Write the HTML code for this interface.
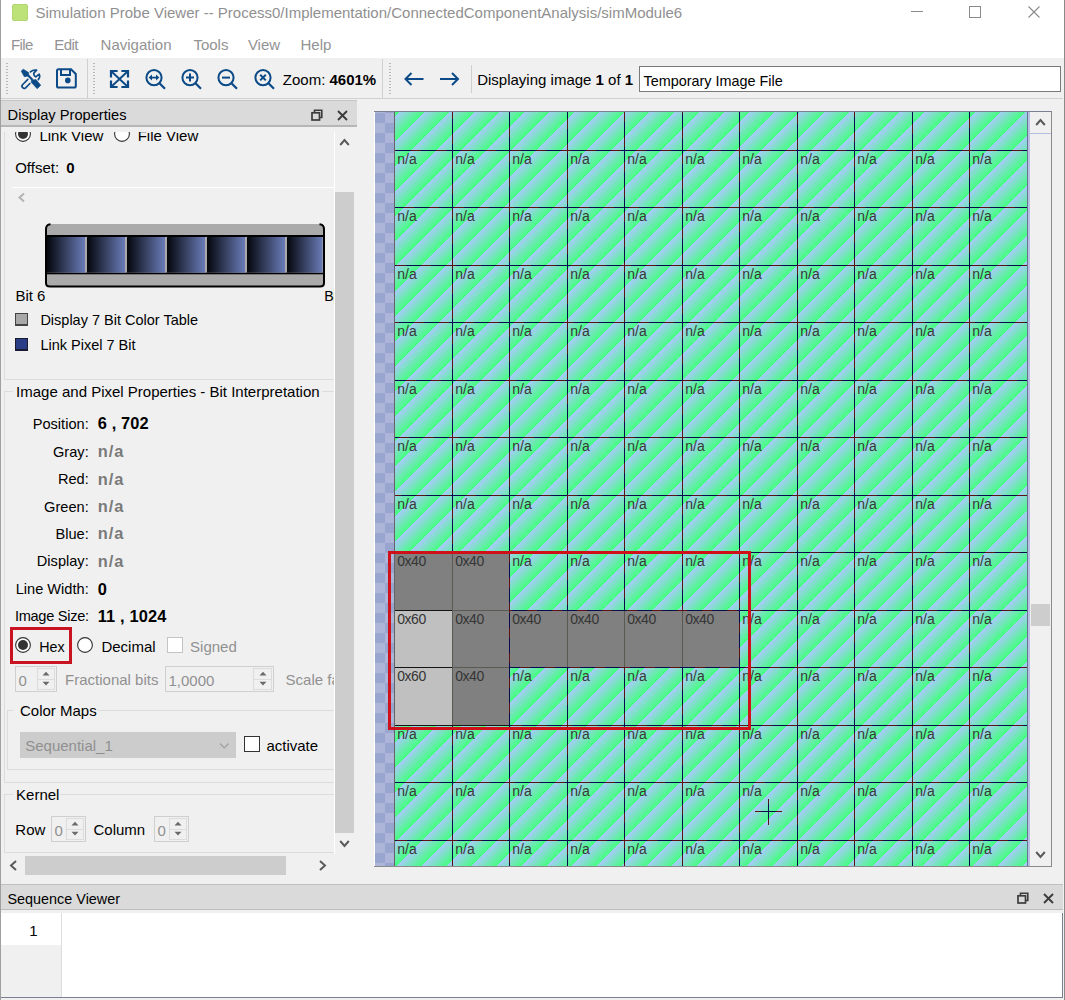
<!DOCTYPE html>
<html><head><meta charset="utf-8"><title>Simulation Probe Viewer</title>
<style>
html,body{margin:0;padding:0}
body{width:1065px;height:1000px;overflow:hidden;position:relative;background:#f0f0f0;font-family:"Liberation Sans",sans-serif}
.a{position:absolute}
.t{white-space:nowrap}
b{font-weight:bold}
</style></head><body>
<div class="a" style="left:0px;top:0px;width:1065px;height:58px;background:#fff"></div>
<div class="a" style="left:12px;top:4px;width:16px;height:17px;background:#bde27a;border-radius:2px;border:1px solid #b2d670;box-sizing:border-box"></div>
<div class="a t" style="left:35.5px;top:4.95px;font-size:15px;line-height:15px;color:#909090;font-weight:normal;letter-spacing:0px;">Simulation Probe Viewer -- Process0/Implementation/ConnectedComponentAnalysis/simModule6</div>
<div class="a" style="left:911px;top:11px;width:12px;height:1px;background:#8a8a8a"></div>
<div class="a" style="left:969px;top:6px;width:12px;height:12px;border:1px solid #8a8a8a;box-sizing:border-box"></div>
<svg class="a" style="left:1027px;top:5px;" width="14" height="14" viewBox="0 0 14 14"><path d="M1.5 1.5 L12.5 12.5 M12.5 1.5 L1.5 12.5" stroke="#8a8a8a" stroke-width="1.1"/></svg>
<div class="a t" style="left:11px;top:37.25px;font-size:15px;line-height:15px;color:#939393;font-weight:normal;letter-spacing:-0.6px;">File</div>
<div class="a t" style="left:54.2px;top:37.25px;font-size:15px;line-height:15px;color:#939393;font-weight:normal;letter-spacing:-0.5px;">Edit</div>
<div class="a t" style="left:100.6px;top:37.25px;font-size:15px;line-height:15px;color:#939393;font-weight:normal;letter-spacing:0px;">Navigation</div>
<div class="a t" style="left:193.4px;top:37.25px;font-size:15px;line-height:15px;color:#939393;font-weight:normal;letter-spacing:0px;">Tools</div>
<div class="a t" style="left:247.9px;top:37.25px;font-size:15px;line-height:15px;color:#939393;font-weight:normal;letter-spacing:0px;">View</div>
<div class="a t" style="left:300.5px;top:37.25px;font-size:15px;line-height:15px;color:#939393;font-weight:normal;letter-spacing:0px;">Help</div>
<div class="a" style="left:0px;top:98px;width:1063px;height:1px;background:#d0d0d0"></div>
<div class="a" style="left:6px;top:63px;width:2px;height:33px;background:repeating-linear-gradient(180deg,#b8b8b8 0 1px,transparent 1px 3px)"></div>
<div class="a" style="left:93px;top:63px;width:2px;height:33px;background:repeating-linear-gradient(180deg,#b8b8b8 0 1px,transparent 1px 3px)"></div>
<div class="a" style="left:389px;top:63px;width:2px;height:33px;background:repeating-linear-gradient(180deg,#b8b8b8 0 1px,transparent 1px 3px)"></div>
<div class="a" style="left:87px;top:59px;width:1px;height:39px;background:#cfcfcf"></div>
<div class="a" style="left:382px;top:59px;width:1px;height:39px;background:#cfcfcf"></div>
<div class="a" style="left:471px;top:65px;width:1px;height:28px;background:#cfcfcf"></div>
<svg class="a" style="left:20px;top:68px;" width="23" height="23" viewBox="0 0 23 23"><g fill="#0b4a86" stroke="#0b4a86" stroke-width="0.6" stroke-linejoin="round">
<path d="M1.2 3.1 L3.3 1.2 L8.6 4.5 L8.9 7.9 L4.3 8.7 Z"/>
<path d="M11.2 14.2 L11.5 12.2 L15.9 11.5 L20.8 17.2 L17.2 20.8 Z"/></g>
<path d="M8.2 7.6 L12.6 12" stroke="#0b4a86" stroke-width="2.1" fill="none"/>
<path d="M7.8 11.4 L2.5 16.7 A2.2 2.2 0 0 0 5.6 19.8 L9.9 15.5" stroke="#0b4a86" stroke-width="1.65" fill="none" stroke-linecap="round"/>
<path d="M10.4 3.9 Q13 1.6 16.6 2.1 L14 4.9 Q13.1 7.4 15.8 8.9 L19.2 6.2 Q20.6 9.2 18.3 11.6" stroke="#0b4a86" stroke-width="1.65" fill="none" stroke-linecap="round" stroke-linejoin="round"/></svg>
<svg class="a" style="left:56px;top:68px;" width="22" height="21" viewBox="0 0 22 21"><path d="M2.6 1.2 H15 L19.8 6 V18 Q19.8 19.6 18.2 19.6 H2.6 Q1 19.6 1 18 V2.8 Q1 1.2 2.6 1.2 Z" fill="none" stroke="#0b4a86" stroke-width="2"/>
<path d="M5 1.5 V7 H14 V1.5" fill="none" stroke="#0b4a86" stroke-width="2"/>
<circle cx="11.8" cy="12.4" r="2.8" fill="#0b4a86"/></svg>
<svg class="a" style="left:109px;top:69px;" width="21" height="20" viewBox="0 0 21 20"><g stroke="#0b4a86" stroke-width="1.9" fill="none"><path d="M2.5 2.5 L18.5 17.5 M18.5 2.5 L2.5 17.5"/></g>
<g stroke="#0b4a86" stroke-width="2.2" fill="none" stroke-linecap="square"><path d="M2 7.5 V2 H7.5"/><path d="M19 7.5 V2 H13.5"/><path d="M2 12.5 V18 H7.5"/><path d="M19 12.5 V18 H13.5"/></g></svg>
<svg class="a" style="left:143.5px;top:68px;" width="24" height="23" viewBox="0 0 24 23"><circle cx="10" cy="9.6" r="7.6" fill="none" stroke="#0b4a86" stroke-width="2"/>
<path d="M15.2 15 L21 20.8" stroke="#0b4a86" stroke-width="2.2" fill="none"/><path d="M6.8 9.6 H13.2" stroke="#0b4a86" stroke-width="1.8"/><path d="M4.6 9.6 L8 6.6 V12.6 Z M15.4 9.6 L12 6.6 V12.6 Z" fill="#0b4a86"/></svg>
<svg class="a" style="left:179.6px;top:68px;" width="24" height="23" viewBox="0 0 24 23"><circle cx="10" cy="9.6" r="7.6" fill="none" stroke="#0b4a86" stroke-width="2"/>
<path d="M15.2 15 L21 20.8" stroke="#0b4a86" stroke-width="2.2" fill="none"/><path d="M6 9.6 H14 M10 5.6 V13.6" stroke="#0b4a86" stroke-width="2"/></svg>
<svg class="a" style="left:215.5px;top:68px;" width="24" height="23" viewBox="0 0 24 23"><circle cx="10" cy="9.6" r="7.6" fill="none" stroke="#0b4a86" stroke-width="2"/>
<path d="M15.2 15 L21 20.8" stroke="#0b4a86" stroke-width="2.2" fill="none"/><path d="M6 9.6 H14" stroke="#0b4a86" stroke-width="2"/></svg>
<svg class="a" style="left:252.60000000000002px;top:68px;" width="24" height="23" viewBox="0 0 24 23"><circle cx="10" cy="9.6" r="7.6" fill="none" stroke="#0b4a86" stroke-width="2"/>
<path d="M15.2 15 L21 20.8" stroke="#0b4a86" stroke-width="2.2" fill="none"/><path d="M7.2 6.8 L12.8 12.4 M12.8 6.8 L7.2 12.4" stroke="#0b4a86" stroke-width="2"/></svg>
<div class="a t" style="left:282.8px;top:71.85px;font-size:15px;line-height:15px;color:#000;font-weight:normal;letter-spacing:0px;">Zoom: <b>4601%</b></div>
<svg class="a" style="left:403px;top:71px;" width="22" height="16" viewBox="0 0 22 16"><path d="M20.5 8 H2.5 M8.5 2 L2.5 8 L8.5 14" stroke="#0b4a86" stroke-width="2" fill="none"/></svg>
<svg class="a" style="left:439px;top:71px;" width="22" height="16" viewBox="0 0 22 16"><path d="M1 8 H19 M13 2 L19 8 L13 14" stroke="#0b4a86" stroke-width="2" fill="none"/></svg>
<div class="a t" style="left:477.2px;top:72.15px;font-size:15px;line-height:15px;color:#000;font-weight:normal;letter-spacing:0px;">Displaying image <b>1</b> of <b>1</b></div>
<div class="a" style="left:639px;top:66px;width:422px;height:26px;background:#fff;border:1px solid #7a7a7a;box-sizing:border-box"></div>
<div class="a t" style="left:643.6px;top:73.96px;font-size:14.4px;line-height:14.4px;color:#000;font-weight:normal;letter-spacing:0px;">Temporary Image File</div>
<div class="a" style="left:0px;top:100px;width:357px;height:27px;background:#dadada;border-top:1px solid #c4c4c4;border-bottom:2px solid #b6b6b6;box-sizing:border-box"></div>
<div class="a t" style="left:7.6px;top:108.24px;font-size:14.66px;line-height:14.66px;color:#000;font-weight:normal;letter-spacing:0px;">Display Properties</div>
<svg class="a" style="left:311px;top:109px;" width="12" height="12" viewBox="0 0 12 12"><path d="M3.5 3.5 V1.2 H10.8 V8.5 H8.5" fill="none" stroke="#3c3c3c" stroke-width="1.6"/><rect x="1" y="3.8" width="7.5" height="7.2" fill="none" stroke="#3c3c3c" stroke-width="1.7"/></svg>
<svg class="a" style="left:337px;top:110px;" width="11" height="11" viewBox="0 0 11 11"><path d="M1 1 L10 10 M10 1 L1 10" stroke="#3c3c3c" stroke-width="1.9"/></svg>
<div class="a" style="left:0;top:0;width:1065px;height:1000px;clip-path:inset(132px 731px 147px 1px)">
<div class="a" style="left:4px;top:100px;width:1px;height:279px;background:#dcdcdc"></div>
<div class="a" style="left:4px;top:379px;width:330px;height:1px;background:#dcdcdc"></div>
<svg class="a" style="left:15px;top:125.69999999999999px;" width="16" height="16" viewBox="0 0 16 16"><circle cx="8" cy="8" r="7.4" fill="#fff" stroke="#333" stroke-width="1.1"/><circle cx="8" cy="8" r="5" fill="#333"/></svg>
<div class="a t" style="left:39.4px;top:128.05px;font-size:15px;line-height:15px;color:#000;font-weight:normal;letter-spacing:0px;">Link View</div>
<svg class="a" style="left:114px;top:125.69999999999999px;" width="16" height="16" viewBox="0 0 16 16"><circle cx="8" cy="8" r="7.4" fill="#fff" stroke="#333" stroke-width="1.1"/></svg>
<div class="a t" style="left:137.7px;top:128.05px;font-size:15px;line-height:15px;color:#000;font-weight:normal;letter-spacing:0px;">File View</div>
<div class="a t" style="left:15.2px;top:159.65px;font-size:15px;line-height:15px;color:#000;font-weight:normal;letter-spacing:0px;">Offset:</div>
<div class="a t" style="left:66.2px;top:159.65px;font-size:15px;line-height:15px;color:#000;font-weight:normal;letter-spacing:0px;"><b>0</b></div>
<div class="a" style="left:12px;top:187px;width:322px;height:1px;background:#fff"></div>
<svg class="a" style="left:17px;top:192px;" width="9" height="11" viewBox="0 0 9 11"><path d="M7 1.5 L2.5 5.5 L7 9.5" stroke="#b4b4b4" stroke-width="2" fill="none"/></svg>
<svg class="a" style="left:45px;top:223px;" width="280" height="65" viewBox="0 0 280 65"><defs><linearGradient id="g" x1="0" x2="1" y1="0" y2="0"><stop offset="0" stop-color="#04060c"/><stop offset="1" stop-color="#6a7cb8"/></linearGradient></defs>
<path d="M5 1 H275 Q279 1 279 5 V60 Q279 64 275 64 H5 Q1 64 1 60 V5 Q1 1 5 1 Z" fill="#aaaaaa"/>
<path d="M5.5 1.2 Q1 1.5 1 6 V60 Q1 63.5 5 63.5 H275 Q279 63.5 279 60 V6 Q279 1.5 274.5 1.2" fill="none" stroke="#000" stroke-width="2"/>
<rect x="1" y="12" width="278" height="2" fill="#000"/>
<rect x="1" y="49.7" width="278" height="1.6" fill="#000"/>
<rect x="2" y="14" width="38" height="35.7" fill="url(#g)"/><rect x="42" y="14" width="38" height="35.7" fill="url(#g)"/><rect x="82" y="14" width="38" height="35.7" fill="url(#g)"/><rect x="122" y="14" width="38" height="35.7" fill="url(#g)"/><rect x="162" y="14" width="38" height="35.7" fill="url(#g)"/><rect x="202" y="14" width="38" height="35.7" fill="url(#g)"/><rect x="242" y="14" width="35.5" height="35.7" fill="url(#g)"/>
<rect x="0" y="12" width="2" height="40" fill="#000"/></svg>
<div class="a t" style="left:15.4px;top:287.95px;font-size:15px;line-height:15px;color:#000;font-weight:normal;letter-spacing:0px;">Bit 6</div>
<div class="a t" style="left:324.3px;top:288.63px;font-size:14.2px;line-height:14.2px;color:#000;font-weight:normal;letter-spacing:-0.4px;">Bit 0</div>
<div class="a" style="left:15px;top:313px;width:13px;height:13px;background:#a8a8a8;border:1px solid #444;border-width:1px 1px 2px 1px;box-sizing:border-box"></div>
<div class="a t" style="left:40.4px;top:313.48px;font-size:14.5px;line-height:14.5px;color:#000;font-weight:normal;letter-spacing:0px;">Display 7 Bit Color Table</div>
<div class="a" style="left:15px;top:338px;width:13px;height:13px;background:#2a3e88;border:1px solid #1a1a30;border-width:1px 1px 2px 1px;box-sizing:border-box"></div>
<div class="a t" style="left:40.4px;top:338.07px;font-size:14.5px;line-height:14.5px;color:#000;font-weight:normal;letter-spacing:0px;">Link Pixel 7 Bit</div>
<div class="a" style="left:4px;top:391px;width:9px;height:1px;background:#dcdcdc"></div>
<div class="a" style="left:322px;top:391px;width:12px;height:1px;background:#dcdcdc"></div>
<div class="a" style="left:4px;top:391px;width:1px;height:392px;background:#dcdcdc"></div>
<div class="a" style="left:4px;top:782px;width:330px;height:1px;background:#dcdcdc"></div>
<div class="a t" style="left:16.1px;top:383.95px;font-size:15px;line-height:15px;color:#000;font-weight:normal;letter-spacing:0px;">Image and Pixel Properties - Bit Interpretation</div>
<div class="a t" style="right:976.3px;top:416.89px;font-size:14.6px;line-height:14.6px;color:#000;font-weight:normal;letter-spacing:0px;text-align:right;">Position:</div>
<div class="a t" style="left:97.7px;top:415.36px;font-size:16.4px;line-height:16.4px;color:#000;font-weight:normal;letter-spacing:0.15px;"><b>6 , 702</b></div>
<div class="a t" style="right:976.3px;top:444.59px;font-size:14.6px;line-height:14.6px;color:#000;font-weight:normal;letter-spacing:0px;text-align:right;">Gray:</div>
<div class="a t" style="left:97.7px;top:443.06px;font-size:16.4px;line-height:16.4px;color:#7a7a7a;font-weight:normal;letter-spacing:1.0px;"><b>n/a</b></div>
<div class="a t" style="right:976.3px;top:472.19px;font-size:14.6px;line-height:14.6px;color:#000;font-weight:normal;letter-spacing:0px;text-align:right;">Red:</div>
<div class="a t" style="left:97.7px;top:470.66px;font-size:16.4px;line-height:16.4px;color:#7a7a7a;font-weight:normal;letter-spacing:1.0px;"><b>n/a</b></div>
<div class="a t" style="right:976.3px;top:499.59px;font-size:14.6px;line-height:14.6px;color:#000;font-weight:normal;letter-spacing:0px;text-align:right;">Green:</div>
<div class="a t" style="left:97.7px;top:498.06px;font-size:16.4px;line-height:16.4px;color:#7a7a7a;font-weight:normal;letter-spacing:1.0px;"><b>n/a</b></div>
<div class="a t" style="right:976.3px;top:526.89px;font-size:14.6px;line-height:14.6px;color:#000;font-weight:normal;letter-spacing:0px;text-align:right;">Blue:</div>
<div class="a t" style="left:97.7px;top:525.36px;font-size:16.4px;line-height:16.4px;color:#7a7a7a;font-weight:normal;letter-spacing:1.0px;"><b>n/a</b></div>
<div class="a t" style="right:976.3px;top:554.49px;font-size:14.6px;line-height:14.6px;color:#000;font-weight:normal;letter-spacing:0px;text-align:right;">Display:</div>
<div class="a t" style="left:97.7px;top:552.96px;font-size:16.4px;line-height:16.4px;color:#7a7a7a;font-weight:normal;letter-spacing:1.0px;"><b>n/a</b></div>
<div class="a t" style="right:976.3px;top:582.09px;font-size:14.6px;line-height:14.6px;color:#000;font-weight:normal;letter-spacing:0px;text-align:right;">Line Width:</div>
<div class="a t" style="left:97.7px;top:580.56px;font-size:16.4px;line-height:16.4px;color:#000;font-weight:normal;letter-spacing:0.15px;"><b>0</b></div>
<div class="a t" style="right:976.3px;top:609.39px;font-size:14.6px;line-height:14.6px;color:#000;font-weight:normal;letter-spacing:-0.3px;text-align:right;">Image Size:</div>
<div class="a t" style="left:97.7px;top:607.86px;font-size:16.4px;line-height:16.4px;color:#000;font-weight:normal;letter-spacing:0.15px;"><b>11 , 1024</b></div>
<svg class="a" style="left:15px;top:637.2px;" width="16" height="16" viewBox="0 0 16 16"><circle cx="8" cy="8" r="7.4" fill="#fff" stroke="#333" stroke-width="1.1"/><circle cx="8" cy="8" r="5" fill="#333"/></svg>
<div class="a t" style="left:39.2px;top:639.85px;font-size:14.3px;line-height:14.3px;color:#000;font-weight:normal;letter-spacing:0px;">Hex</div>
<svg class="a" style="left:77px;top:637.2px;" width="16" height="16" viewBox="0 0 16 16"><circle cx="8" cy="8" r="7.4" fill="#fff" stroke="#333" stroke-width="1.1"/></svg>
<div class="a t" style="left:101.4px;top:639.25px;font-size:15px;line-height:15px;color:#000;font-weight:normal;letter-spacing:0px;">Decimal</div>
<div class="a" style="left:167px;top:637px;width:16px;height:16px;background:#fff;border:1px solid #c4c4c4;box-sizing:border-box"></div>
<div class="a t" style="left:190.1px;top:639.05px;font-size:15px;line-height:15px;color:#909090;font-weight:normal;letter-spacing:0px;">Signed</div>
<div class="a" style="left:15px;top:666px;width:42px;height:26px;border:1px solid #cfcfcf;box-sizing:border-box"></div>
<div class="a" style="left:37px;top:668px;width:18px;height:22px;border:1px solid #dcdcdc;box-sizing:border-box"></div>
<div class="a" style="left:37px;top:678.5px;width:18px;height:1px;background:#dcdcdc"></div>
<svg class="a" style="left:42.0px;top:671px;" width="8" height="16" viewBox="0 0 8 16"><path d="M0.5 4.6 L4 0.8 L7.5 4.6 Z M0.5 10.8 L4 14.6 L7.5 10.8 Z" fill="#6a6a6a"/></svg>
<div class="a t" style="left:18.5px;top:672.75px;font-size:15px;line-height:15px;color:#909090;font-weight:normal;letter-spacing:0px;">0</div>
<div class="a t" style="left:65.1px;top:671.85px;font-size:15px;line-height:15px;color:#909090;font-weight:normal;letter-spacing:0px;">Fractional bits</div>
<div class="a" style="left:165px;top:666px;width:109px;height:26px;border:1px solid #cfcfcf;box-sizing:border-box"></div>
<div class="a" style="left:253px;top:668px;width:19px;height:22px;border:1px solid #dcdcdc;box-sizing:border-box"></div>
<div class="a" style="left:253px;top:678.5px;width:19px;height:1px;background:#dcdcdc"></div>
<svg class="a" style="left:258.5px;top:671px;" width="8" height="16" viewBox="0 0 8 16"><path d="M0.5 4.6 L4 0.8 L7.5 4.6 Z M0.5 10.8 L4 14.6 L7.5 10.8 Z" fill="#6a6a6a"/></svg>
<div class="a t" style="left:168.5px;top:672.75px;font-size:15px;line-height:15px;color:#909090;font-weight:normal;letter-spacing:0px;">1,0000</div>
<div class="a t" style="left:285.6px;top:671.85px;font-size:15px;line-height:15px;color:#909090;font-weight:normal;letter-spacing:0px;">Scale factor</div>
<div class="a" style="left:7px;top:710px;width:6px;height:1px;background:#dcdcdc"></div>
<div class="a" style="left:98px;top:710px;width:236px;height:1px;background:#dcdcdc"></div>
<div class="a" style="left:7px;top:710px;width:1px;height:59px;background:#dcdcdc"></div>
<div class="a" style="left:7px;top:769px;width:327px;height:1px;background:#dcdcdc"></div>
<div class="a t" style="left:20px;top:702.75px;font-size:15px;line-height:15px;color:#000;font-weight:normal;letter-spacing:0px;">Color Maps</div>
<div class="a" style="left:20px;top:732px;width:216px;height:26px;background:#cccccc"></div>
<div class="a t" style="left:25.2px;top:738.45px;font-size:15px;line-height:15px;color:#909090;font-weight:normal;letter-spacing:0px;">Sequential_1</div>
<svg class="a" style="left:219px;top:742px;" width="11" height="8" viewBox="0 0 11 8"><path d="M1 1.5 L5.3 6 L9.6 1.5" stroke="#a0a0a0" stroke-width="1.2" fill="none"/></svg>
<div class="a" style="left:244px;top:736px;width:16px;height:16px;background:#fff;border:1px solid #333;box-sizing:border-box"></div>
<div class="a t" style="left:266.4px;top:738.25px;font-size:15px;line-height:15px;color:#000;font-weight:normal;letter-spacing:0px;">activate</div>
<div class="a" style="left:4px;top:794px;width:9px;height:1px;background:#dcdcdc"></div>
<div class="a" style="left:60px;top:794px;width:274px;height:1px;background:#dcdcdc"></div>
<div class="a" style="left:4px;top:794px;width:1px;height:59px;background:#dcdcdc"></div>
<div class="a" style="left:4px;top:852px;width:330px;height:1px;background:#dcdcdc"></div>
<div class="a t" style="left:16.1px;top:786.85px;font-size:15px;line-height:15px;color:#000;font-weight:normal;letter-spacing:0px;">Kernel</div>
<div class="a t" style="left:15.3px;top:821.75px;font-size:15px;line-height:15px;color:#000;font-weight:normal;letter-spacing:0px;">Row</div>
<div class="a" style="left:51px;top:816px;width:35px;height:26px;border:1px solid #cfcfcf;box-sizing:border-box"></div>
<div class="a" style="left:66px;top:818px;width:18px;height:22px;border:1px solid #dcdcdc;box-sizing:border-box"></div>
<div class="a" style="left:66px;top:828.5px;width:18px;height:1px;background:#dcdcdc"></div>
<svg class="a" style="left:71.0px;top:821px;" width="8" height="16" viewBox="0 0 8 16"><path d="M0.5 4.6 L4 0.8 L7.5 4.6 Z M0.5 10.8 L4 14.6 L7.5 10.8 Z" fill="#6a6a6a"/></svg>
<div class="a t" style="left:54.5px;top:822.75px;font-size:15px;line-height:15px;color:#909090;font-weight:normal;letter-spacing:0px;">0</div>
<div class="a t" style="left:93.5px;top:821.75px;font-size:15px;line-height:15px;color:#000;font-weight:normal;letter-spacing:0px;">Column</div>
<div class="a" style="left:154px;top:816px;width:35px;height:26px;border:1px solid #cfcfcf;box-sizing:border-box"></div>
<div class="a" style="left:169px;top:818px;width:18px;height:22px;border:1px solid #dcdcdc;box-sizing:border-box"></div>
<div class="a" style="left:169px;top:828.5px;width:18px;height:1px;background:#dcdcdc"></div>
<svg class="a" style="left:174.0px;top:821px;" width="8" height="16" viewBox="0 0 8 16"><path d="M0.5 4.6 L4 0.8 L7.5 4.6 Z M0.5 10.8 L4 14.6 L7.5 10.8 Z" fill="#6a6a6a"/></svg>
<div class="a t" style="left:157.5px;top:822.75px;font-size:15px;line-height:15px;color:#909090;font-weight:normal;letter-spacing:0px;">0</div>
</div>
<div class="a" style="left:10px;top:627px;width:62px;height:37px;border:3px solid #c81420;box-sizing:border-box"></div>
<div class="a" style="left:334px;top:132px;width:1px;height:722px;background:#fff"></div>
<svg class="a" style="left:339px;top:137px;" width="11" height="10" viewBox="0 0 11 10"><path d="M1.2 8 L5.5 3 L9.8 8" stroke="#5a5a5a" stroke-width="2" fill="none"/></svg>
<div class="a" style="left:335px;top:192px;width:19px;height:641px;background:#cdcdcd"></div>
<svg class="a" style="left:339px;top:839px;" width="11" height="10" viewBox="0 0 11 10"><path d="M1.2 2 L5.5 7 L9.8 2" stroke="#5a5a5a" stroke-width="2" fill="none"/></svg>
<div class="a" style="left:25px;top:856px;width:261px;height:19px;background:#cdcdcd"></div>
<svg class="a" style="left:8px;top:860px;" width="10" height="11" viewBox="0 0 10 11"><path d="M8 1 L3 5.5 L8 10" stroke="#5a5a5a" stroke-width="2" fill="none"/></svg>
<svg class="a" style="left:318px;top:860px;" width="10" height="11" viewBox="0 0 10 11"><path d="M2 1 L7 5.5 L2 10" stroke="#5a5a5a" stroke-width="2" fill="none"/></svg>
<div class="a" style="left:374px;top:111px;width:677px;height:1px;background:#7a8090"></div>
<div class="a" style="left:374px;top:866px;width:677px;height:1px;background:#8a8a8a"></div>
<div class="a" style="left:374px;top:112px;width:1px;height:754px;background:#fff"></div>
<div class="a" style="left:375px;top:112px;width:19px;height:754px;background:conic-gradient(#adb6d9 0 90deg,#97a5cf 90deg 180deg,#adb6d9 180deg 270deg,#97a5cf 270deg 360deg);background-size:20px 20px;background-position:0 1px"></div>
<div class="a" style="left:394px;top:112px;width:1px;height:754px;background:#646464"></div>
<div class="a" style="left:395px;top:112px;width:633px;height:754px;background:repeating-linear-gradient(135deg,#a6cbf8 7.181px,#44ff80 24.890px);background-attachment:fixed"></div>
<div class="a" style="left:395px;top:553px;width:57px;height:58px;background:#808080"></div>
<div class="a" style="left:453px;top:553px;width:56px;height:58px;background:#808080"></div>
<div class="a" style="left:395px;top:611px;width:57px;height:57px;background:#c0c0c0"></div>
<div class="a" style="left:453px;top:611px;width:56px;height:57px;background:#808080"></div>
<div class="a" style="left:510px;top:611px;width:57px;height:57px;background:#808080"></div>
<div class="a" style="left:568px;top:611px;width:56px;height:57px;background:#808080"></div>
<div class="a" style="left:625px;top:611px;width:57px;height:57px;background:#808080"></div>
<div class="a" style="left:683px;top:611px;width:56px;height:57px;background:#808080"></div>
<div class="a" style="left:395px;top:668px;width:57px;height:58px;background:#c0c0c0"></div>
<div class="a" style="left:453px;top:668px;width:56px;height:58px;background:#808080"></div>
<div class="a" style="left:395px;top:150px;width:633px;height:1px;background:repeating-linear-gradient(135deg,#5c1212 7.181px,#5c1212 14.252px,#0a0a4e 14.252px,#0a0a4e 24.890px);background-attachment:fixed"></div>
<div class="a" style="left:395px;top:207px;width:633px;height:1px;background:repeating-linear-gradient(135deg,#5c1212 7.181px,#5c1212 14.252px,#0a0a4e 14.252px,#0a0a4e 24.890px);background-attachment:fixed"></div>
<div class="a" style="left:395px;top:265px;width:633px;height:1px;background:repeating-linear-gradient(135deg,#5c1212 7.181px,#5c1212 14.252px,#0a0a4e 14.252px,#0a0a4e 24.890px);background-attachment:fixed"></div>
<div class="a" style="left:395px;top:322px;width:633px;height:1px;background:repeating-linear-gradient(135deg,#5c1212 7.181px,#5c1212 14.252px,#0a0a4e 14.252px,#0a0a4e 24.890px);background-attachment:fixed"></div>
<div class="a" style="left:395px;top:380px;width:633px;height:1px;background:repeating-linear-gradient(135deg,#5c1212 7.181px,#5c1212 14.252px,#0a0a4e 14.252px,#0a0a4e 24.890px);background-attachment:fixed"></div>
<div class="a" style="left:395px;top:437px;width:633px;height:1px;background:repeating-linear-gradient(135deg,#5c1212 7.181px,#5c1212 14.252px,#0a0a4e 14.252px,#0a0a4e 24.890px);background-attachment:fixed"></div>
<div class="a" style="left:395px;top:495px;width:633px;height:1px;background:repeating-linear-gradient(135deg,#5c1212 7.181px,#5c1212 14.252px,#0a0a4e 14.252px,#0a0a4e 24.890px);background-attachment:fixed"></div>
<div class="a" style="left:395px;top:552px;width:633px;height:1px;background:repeating-linear-gradient(135deg,#5c1212 7.181px,#5c1212 14.252px,#0a0a4e 14.252px,#0a0a4e 24.890px);background-attachment:fixed"></div>
<div class="a" style="left:395px;top:610px;width:633px;height:1px;background:repeating-linear-gradient(135deg,#5c1212 7.181px,#5c1212 14.252px,#0a0a4e 14.252px,#0a0a4e 24.890px);background-attachment:fixed"></div>
<div class="a" style="left:395px;top:667px;width:633px;height:1px;background:repeating-linear-gradient(135deg,#5c1212 7.181px,#5c1212 14.252px,#0a0a4e 14.252px,#0a0a4e 24.890px);background-attachment:fixed"></div>
<div class="a" style="left:395px;top:725px;width:633px;height:1px;background:repeating-linear-gradient(135deg,#5c1212 7.181px,#5c1212 14.252px,#0a0a4e 14.252px,#0a0a4e 24.890px);background-attachment:fixed"></div>
<div class="a" style="left:395px;top:782px;width:633px;height:1px;background:repeating-linear-gradient(135deg,#5c1212 7.181px,#5c1212 14.252px,#0a0a4e 14.252px,#0a0a4e 24.890px);background-attachment:fixed"></div>
<div class="a" style="left:395px;top:840px;width:633px;height:1px;background:repeating-linear-gradient(135deg,#5c1212 7.181px,#5c1212 14.252px,#0a0a4e 14.252px,#0a0a4e 24.890px);background-attachment:fixed"></div>
<div class="a" style="left:452px;top:112px;width:1px;height:754px;background:repeating-linear-gradient(135deg,#5c1212 7.181px,#5c1212 14.252px,#0a0a4e 14.252px,#0a0a4e 24.890px);background-attachment:fixed"></div>
<div class="a" style="left:509px;top:112px;width:1px;height:754px;background:repeating-linear-gradient(135deg,#5c1212 7.181px,#5c1212 14.252px,#0a0a4e 14.252px,#0a0a4e 24.890px);background-attachment:fixed"></div>
<div class="a" style="left:567px;top:112px;width:1px;height:754px;background:repeating-linear-gradient(135deg,#5c1212 7.181px,#5c1212 14.252px,#0a0a4e 14.252px,#0a0a4e 24.890px);background-attachment:fixed"></div>
<div class="a" style="left:624px;top:112px;width:1px;height:754px;background:repeating-linear-gradient(135deg,#5c1212 7.181px,#5c1212 14.252px,#0a0a4e 14.252px,#0a0a4e 24.890px);background-attachment:fixed"></div>
<div class="a" style="left:682px;top:112px;width:1px;height:754px;background:repeating-linear-gradient(135deg,#5c1212 7.181px,#5c1212 14.252px,#0a0a4e 14.252px,#0a0a4e 24.890px);background-attachment:fixed"></div>
<div class="a" style="left:739px;top:112px;width:1px;height:754px;background:repeating-linear-gradient(135deg,#5c1212 7.181px,#5c1212 14.252px,#0a0a4e 14.252px,#0a0a4e 24.890px);background-attachment:fixed"></div>
<div class="a" style="left:797px;top:112px;width:1px;height:754px;background:repeating-linear-gradient(135deg,#5c1212 7.181px,#5c1212 14.252px,#0a0a4e 14.252px,#0a0a4e 24.890px);background-attachment:fixed"></div>
<div class="a" style="left:854px;top:112px;width:1px;height:754px;background:repeating-linear-gradient(135deg,#5c1212 7.181px,#5c1212 14.252px,#0a0a4e 14.252px,#0a0a4e 24.890px);background-attachment:fixed"></div>
<div class="a" style="left:912px;top:112px;width:1px;height:754px;background:repeating-linear-gradient(135deg,#5c1212 7.181px,#5c1212 14.252px,#0a0a4e 14.252px,#0a0a4e 24.890px);background-attachment:fixed"></div>
<div class="a" style="left:969px;top:112px;width:1px;height:754px;background:repeating-linear-gradient(135deg,#5c1212 7.181px,#5c1212 14.252px,#0a0a4e 14.252px,#0a0a4e 24.890px);background-attachment:fixed"></div>
<div class="a" style="left:1027px;top:112px;width:1px;height:754px;background:#6a7090"></div>
<div class="a" style="left:395px;top:725px;width:114px;height:1px;background:#141414"></div>
<div class="a" style="left:395px;top:610px;width:57px;height:1px;background:#141414"></div>
<div class="a" style="left:452px;top:610px;width:57px;height:1px;background:#5a5a52"></div>
<div class="a" style="left:395px;top:667px;width:57px;height:1px;background:#141414"></div>
<div class="a" style="left:452px;top:667px;width:57px;height:1px;background:#5a5a52"></div>
<div class="a" style="left:452px;top:553px;width:1px;height:172px;background:#5a5a52"></div>
<div class="a" style="left:567px;top:611px;width:1px;height:56px;background:#5a5a52"></div>
<div class="a" style="left:624px;top:611px;width:1px;height:56px;background:#5a5a52"></div>
<div class="a" style="left:682px;top:611px;width:1px;height:56px;background:#5a5a52"></div>
<div class="a" style="left:0;top:0;width:1065px;height:1000px;clip-path:inset(112px 37px 134px 395px)">
<div class="a t" style="left:397.2px;top:151.70px;font-size:14px;line-height:14px;color:#383838;font-weight:normal;letter-spacing:0.1px;">n/a</div>
<div class="a t" style="left:455.2px;top:151.70px;font-size:14px;line-height:14px;color:#383838;font-weight:normal;letter-spacing:0.1px;">n/a</div>
<div class="a t" style="left:512.2px;top:151.70px;font-size:14px;line-height:14px;color:#383838;font-weight:normal;letter-spacing:0.1px;">n/a</div>
<div class="a t" style="left:570.2px;top:151.70px;font-size:14px;line-height:14px;color:#383838;font-weight:normal;letter-spacing:0.1px;">n/a</div>
<div class="a t" style="left:627.2px;top:151.70px;font-size:14px;line-height:14px;color:#383838;font-weight:normal;letter-spacing:0.1px;">n/a</div>
<div class="a t" style="left:685.2px;top:151.70px;font-size:14px;line-height:14px;color:#383838;font-weight:normal;letter-spacing:0.1px;">n/a</div>
<div class="a t" style="left:742.2px;top:151.70px;font-size:14px;line-height:14px;color:#383838;font-weight:normal;letter-spacing:0.1px;">n/a</div>
<div class="a t" style="left:800.2px;top:151.70px;font-size:14px;line-height:14px;color:#383838;font-weight:normal;letter-spacing:0.1px;">n/a</div>
<div class="a t" style="left:857.2px;top:151.70px;font-size:14px;line-height:14px;color:#383838;font-weight:normal;letter-spacing:0.1px;">n/a</div>
<div class="a t" style="left:915.2px;top:151.70px;font-size:14px;line-height:14px;color:#383838;font-weight:normal;letter-spacing:0.1px;">n/a</div>
<div class="a t" style="left:972.2px;top:151.70px;font-size:14px;line-height:14px;color:#383838;font-weight:normal;letter-spacing:0.1px;">n/a</div>
<div class="a t" style="left:397.2px;top:208.70px;font-size:14px;line-height:14px;color:#383838;font-weight:normal;letter-spacing:0.1px;">n/a</div>
<div class="a t" style="left:455.2px;top:208.70px;font-size:14px;line-height:14px;color:#383838;font-weight:normal;letter-spacing:0.1px;">n/a</div>
<div class="a t" style="left:512.2px;top:208.70px;font-size:14px;line-height:14px;color:#383838;font-weight:normal;letter-spacing:0.1px;">n/a</div>
<div class="a t" style="left:570.2px;top:208.70px;font-size:14px;line-height:14px;color:#383838;font-weight:normal;letter-spacing:0.1px;">n/a</div>
<div class="a t" style="left:627.2px;top:208.70px;font-size:14px;line-height:14px;color:#383838;font-weight:normal;letter-spacing:0.1px;">n/a</div>
<div class="a t" style="left:685.2px;top:208.70px;font-size:14px;line-height:14px;color:#383838;font-weight:normal;letter-spacing:0.1px;">n/a</div>
<div class="a t" style="left:742.2px;top:208.70px;font-size:14px;line-height:14px;color:#383838;font-weight:normal;letter-spacing:0.1px;">n/a</div>
<div class="a t" style="left:800.2px;top:208.70px;font-size:14px;line-height:14px;color:#383838;font-weight:normal;letter-spacing:0.1px;">n/a</div>
<div class="a t" style="left:857.2px;top:208.70px;font-size:14px;line-height:14px;color:#383838;font-weight:normal;letter-spacing:0.1px;">n/a</div>
<div class="a t" style="left:915.2px;top:208.70px;font-size:14px;line-height:14px;color:#383838;font-weight:normal;letter-spacing:0.1px;">n/a</div>
<div class="a t" style="left:972.2px;top:208.70px;font-size:14px;line-height:14px;color:#383838;font-weight:normal;letter-spacing:0.1px;">n/a</div>
<div class="a t" style="left:397.2px;top:266.70px;font-size:14px;line-height:14px;color:#383838;font-weight:normal;letter-spacing:0.1px;">n/a</div>
<div class="a t" style="left:455.2px;top:266.70px;font-size:14px;line-height:14px;color:#383838;font-weight:normal;letter-spacing:0.1px;">n/a</div>
<div class="a t" style="left:512.2px;top:266.70px;font-size:14px;line-height:14px;color:#383838;font-weight:normal;letter-spacing:0.1px;">n/a</div>
<div class="a t" style="left:570.2px;top:266.70px;font-size:14px;line-height:14px;color:#383838;font-weight:normal;letter-spacing:0.1px;">n/a</div>
<div class="a t" style="left:627.2px;top:266.70px;font-size:14px;line-height:14px;color:#383838;font-weight:normal;letter-spacing:0.1px;">n/a</div>
<div class="a t" style="left:685.2px;top:266.70px;font-size:14px;line-height:14px;color:#383838;font-weight:normal;letter-spacing:0.1px;">n/a</div>
<div class="a t" style="left:742.2px;top:266.70px;font-size:14px;line-height:14px;color:#383838;font-weight:normal;letter-spacing:0.1px;">n/a</div>
<div class="a t" style="left:800.2px;top:266.70px;font-size:14px;line-height:14px;color:#383838;font-weight:normal;letter-spacing:0.1px;">n/a</div>
<div class="a t" style="left:857.2px;top:266.70px;font-size:14px;line-height:14px;color:#383838;font-weight:normal;letter-spacing:0.1px;">n/a</div>
<div class="a t" style="left:915.2px;top:266.70px;font-size:14px;line-height:14px;color:#383838;font-weight:normal;letter-spacing:0.1px;">n/a</div>
<div class="a t" style="left:972.2px;top:266.70px;font-size:14px;line-height:14px;color:#383838;font-weight:normal;letter-spacing:0.1px;">n/a</div>
<div class="a t" style="left:397.2px;top:323.70px;font-size:14px;line-height:14px;color:#383838;font-weight:normal;letter-spacing:0.1px;">n/a</div>
<div class="a t" style="left:455.2px;top:323.70px;font-size:14px;line-height:14px;color:#383838;font-weight:normal;letter-spacing:0.1px;">n/a</div>
<div class="a t" style="left:512.2px;top:323.70px;font-size:14px;line-height:14px;color:#383838;font-weight:normal;letter-spacing:0.1px;">n/a</div>
<div class="a t" style="left:570.2px;top:323.70px;font-size:14px;line-height:14px;color:#383838;font-weight:normal;letter-spacing:0.1px;">n/a</div>
<div class="a t" style="left:627.2px;top:323.70px;font-size:14px;line-height:14px;color:#383838;font-weight:normal;letter-spacing:0.1px;">n/a</div>
<div class="a t" style="left:685.2px;top:323.70px;font-size:14px;line-height:14px;color:#383838;font-weight:normal;letter-spacing:0.1px;">n/a</div>
<div class="a t" style="left:742.2px;top:323.70px;font-size:14px;line-height:14px;color:#383838;font-weight:normal;letter-spacing:0.1px;">n/a</div>
<div class="a t" style="left:800.2px;top:323.70px;font-size:14px;line-height:14px;color:#383838;font-weight:normal;letter-spacing:0.1px;">n/a</div>
<div class="a t" style="left:857.2px;top:323.70px;font-size:14px;line-height:14px;color:#383838;font-weight:normal;letter-spacing:0.1px;">n/a</div>
<div class="a t" style="left:915.2px;top:323.70px;font-size:14px;line-height:14px;color:#383838;font-weight:normal;letter-spacing:0.1px;">n/a</div>
<div class="a t" style="left:972.2px;top:323.70px;font-size:14px;line-height:14px;color:#383838;font-weight:normal;letter-spacing:0.1px;">n/a</div>
<div class="a t" style="left:397.2px;top:381.70px;font-size:14px;line-height:14px;color:#383838;font-weight:normal;letter-spacing:0.1px;">n/a</div>
<div class="a t" style="left:455.2px;top:381.70px;font-size:14px;line-height:14px;color:#383838;font-weight:normal;letter-spacing:0.1px;">n/a</div>
<div class="a t" style="left:512.2px;top:381.70px;font-size:14px;line-height:14px;color:#383838;font-weight:normal;letter-spacing:0.1px;">n/a</div>
<div class="a t" style="left:570.2px;top:381.70px;font-size:14px;line-height:14px;color:#383838;font-weight:normal;letter-spacing:0.1px;">n/a</div>
<div class="a t" style="left:627.2px;top:381.70px;font-size:14px;line-height:14px;color:#383838;font-weight:normal;letter-spacing:0.1px;">n/a</div>
<div class="a t" style="left:685.2px;top:381.70px;font-size:14px;line-height:14px;color:#383838;font-weight:normal;letter-spacing:0.1px;">n/a</div>
<div class="a t" style="left:742.2px;top:381.70px;font-size:14px;line-height:14px;color:#383838;font-weight:normal;letter-spacing:0.1px;">n/a</div>
<div class="a t" style="left:800.2px;top:381.70px;font-size:14px;line-height:14px;color:#383838;font-weight:normal;letter-spacing:0.1px;">n/a</div>
<div class="a t" style="left:857.2px;top:381.70px;font-size:14px;line-height:14px;color:#383838;font-weight:normal;letter-spacing:0.1px;">n/a</div>
<div class="a t" style="left:915.2px;top:381.70px;font-size:14px;line-height:14px;color:#383838;font-weight:normal;letter-spacing:0.1px;">n/a</div>
<div class="a t" style="left:972.2px;top:381.70px;font-size:14px;line-height:14px;color:#383838;font-weight:normal;letter-spacing:0.1px;">n/a</div>
<div class="a t" style="left:397.2px;top:438.70px;font-size:14px;line-height:14px;color:#383838;font-weight:normal;letter-spacing:0.1px;">n/a</div>
<div class="a t" style="left:455.2px;top:438.70px;font-size:14px;line-height:14px;color:#383838;font-weight:normal;letter-spacing:0.1px;">n/a</div>
<div class="a t" style="left:512.2px;top:438.70px;font-size:14px;line-height:14px;color:#383838;font-weight:normal;letter-spacing:0.1px;">n/a</div>
<div class="a t" style="left:570.2px;top:438.70px;font-size:14px;line-height:14px;color:#383838;font-weight:normal;letter-spacing:0.1px;">n/a</div>
<div class="a t" style="left:627.2px;top:438.70px;font-size:14px;line-height:14px;color:#383838;font-weight:normal;letter-spacing:0.1px;">n/a</div>
<div class="a t" style="left:685.2px;top:438.70px;font-size:14px;line-height:14px;color:#383838;font-weight:normal;letter-spacing:0.1px;">n/a</div>
<div class="a t" style="left:742.2px;top:438.70px;font-size:14px;line-height:14px;color:#383838;font-weight:normal;letter-spacing:0.1px;">n/a</div>
<div class="a t" style="left:800.2px;top:438.70px;font-size:14px;line-height:14px;color:#383838;font-weight:normal;letter-spacing:0.1px;">n/a</div>
<div class="a t" style="left:857.2px;top:438.70px;font-size:14px;line-height:14px;color:#383838;font-weight:normal;letter-spacing:0.1px;">n/a</div>
<div class="a t" style="left:915.2px;top:438.70px;font-size:14px;line-height:14px;color:#383838;font-weight:normal;letter-spacing:0.1px;">n/a</div>
<div class="a t" style="left:972.2px;top:438.70px;font-size:14px;line-height:14px;color:#383838;font-weight:normal;letter-spacing:0.1px;">n/a</div>
<div class="a t" style="left:397.2px;top:496.70px;font-size:14px;line-height:14px;color:#383838;font-weight:normal;letter-spacing:0.1px;">n/a</div>
<div class="a t" style="left:455.2px;top:496.70px;font-size:14px;line-height:14px;color:#383838;font-weight:normal;letter-spacing:0.1px;">n/a</div>
<div class="a t" style="left:512.2px;top:496.70px;font-size:14px;line-height:14px;color:#383838;font-weight:normal;letter-spacing:0.1px;">n/a</div>
<div class="a t" style="left:570.2px;top:496.70px;font-size:14px;line-height:14px;color:#383838;font-weight:normal;letter-spacing:0.1px;">n/a</div>
<div class="a t" style="left:627.2px;top:496.70px;font-size:14px;line-height:14px;color:#383838;font-weight:normal;letter-spacing:0.1px;">n/a</div>
<div class="a t" style="left:685.2px;top:496.70px;font-size:14px;line-height:14px;color:#383838;font-weight:normal;letter-spacing:0.1px;">n/a</div>
<div class="a t" style="left:742.2px;top:496.70px;font-size:14px;line-height:14px;color:#383838;font-weight:normal;letter-spacing:0.1px;">n/a</div>
<div class="a t" style="left:800.2px;top:496.70px;font-size:14px;line-height:14px;color:#383838;font-weight:normal;letter-spacing:0.1px;">n/a</div>
<div class="a t" style="left:857.2px;top:496.70px;font-size:14px;line-height:14px;color:#383838;font-weight:normal;letter-spacing:0.1px;">n/a</div>
<div class="a t" style="left:915.2px;top:496.70px;font-size:14px;line-height:14px;color:#383838;font-weight:normal;letter-spacing:0.1px;">n/a</div>
<div class="a t" style="left:972.2px;top:496.70px;font-size:14px;line-height:14px;color:#383838;font-weight:normal;letter-spacing:0.1px;">n/a</div>
<div class="a t" style="left:397.2px;top:553.70px;font-size:14px;line-height:14px;color:#353535;font-weight:normal;letter-spacing:-0.45px;">0x40</div>
<div class="a t" style="left:455.2px;top:553.70px;font-size:14px;line-height:14px;color:#353535;font-weight:normal;letter-spacing:-0.45px;">0x40</div>
<div class="a t" style="left:512.2px;top:553.70px;font-size:14px;line-height:14px;color:#383838;font-weight:normal;letter-spacing:0.1px;">n/a</div>
<div class="a t" style="left:570.2px;top:553.70px;font-size:14px;line-height:14px;color:#383838;font-weight:normal;letter-spacing:0.1px;">n/a</div>
<div class="a t" style="left:627.2px;top:553.70px;font-size:14px;line-height:14px;color:#383838;font-weight:normal;letter-spacing:0.1px;">n/a</div>
<div class="a t" style="left:685.2px;top:553.70px;font-size:14px;line-height:14px;color:#383838;font-weight:normal;letter-spacing:0.1px;">n/a</div>
<div class="a t" style="left:742.2px;top:553.70px;font-size:14px;line-height:14px;color:#383838;font-weight:normal;letter-spacing:0.1px;">n/a</div>
<div class="a t" style="left:800.2px;top:553.70px;font-size:14px;line-height:14px;color:#383838;font-weight:normal;letter-spacing:0.1px;">n/a</div>
<div class="a t" style="left:857.2px;top:553.70px;font-size:14px;line-height:14px;color:#383838;font-weight:normal;letter-spacing:0.1px;">n/a</div>
<div class="a t" style="left:915.2px;top:553.70px;font-size:14px;line-height:14px;color:#383838;font-weight:normal;letter-spacing:0.1px;">n/a</div>
<div class="a t" style="left:972.2px;top:553.70px;font-size:14px;line-height:14px;color:#383838;font-weight:normal;letter-spacing:0.1px;">n/a</div>
<div class="a t" style="left:397.2px;top:611.70px;font-size:14px;line-height:14px;color:#353535;font-weight:normal;letter-spacing:-0.45px;">0x60</div>
<div class="a t" style="left:455.2px;top:611.70px;font-size:14px;line-height:14px;color:#353535;font-weight:normal;letter-spacing:-0.45px;">0x40</div>
<div class="a t" style="left:512.2px;top:611.70px;font-size:14px;line-height:14px;color:#353535;font-weight:normal;letter-spacing:-0.45px;">0x40</div>
<div class="a t" style="left:570.2px;top:611.70px;font-size:14px;line-height:14px;color:#353535;font-weight:normal;letter-spacing:-0.45px;">0x40</div>
<div class="a t" style="left:627.2px;top:611.70px;font-size:14px;line-height:14px;color:#353535;font-weight:normal;letter-spacing:-0.45px;">0x40</div>
<div class="a t" style="left:685.2px;top:611.70px;font-size:14px;line-height:14px;color:#353535;font-weight:normal;letter-spacing:-0.45px;">0x40</div>
<div class="a t" style="left:742.2px;top:611.70px;font-size:14px;line-height:14px;color:#383838;font-weight:normal;letter-spacing:0.1px;">n/a</div>
<div class="a t" style="left:800.2px;top:611.70px;font-size:14px;line-height:14px;color:#383838;font-weight:normal;letter-spacing:0.1px;">n/a</div>
<div class="a t" style="left:857.2px;top:611.70px;font-size:14px;line-height:14px;color:#383838;font-weight:normal;letter-spacing:0.1px;">n/a</div>
<div class="a t" style="left:915.2px;top:611.70px;font-size:14px;line-height:14px;color:#383838;font-weight:normal;letter-spacing:0.1px;">n/a</div>
<div class="a t" style="left:972.2px;top:611.70px;font-size:14px;line-height:14px;color:#383838;font-weight:normal;letter-spacing:0.1px;">n/a</div>
<div class="a t" style="left:397.2px;top:668.70px;font-size:14px;line-height:14px;color:#353535;font-weight:normal;letter-spacing:-0.45px;">0x60</div>
<div class="a t" style="left:455.2px;top:668.70px;font-size:14px;line-height:14px;color:#353535;font-weight:normal;letter-spacing:-0.45px;">0x40</div>
<div class="a t" style="left:512.2px;top:668.70px;font-size:14px;line-height:14px;color:#383838;font-weight:normal;letter-spacing:0.1px;">n/a</div>
<div class="a t" style="left:570.2px;top:668.70px;font-size:14px;line-height:14px;color:#383838;font-weight:normal;letter-spacing:0.1px;">n/a</div>
<div class="a t" style="left:627.2px;top:668.70px;font-size:14px;line-height:14px;color:#383838;font-weight:normal;letter-spacing:0.1px;">n/a</div>
<div class="a t" style="left:685.2px;top:668.70px;font-size:14px;line-height:14px;color:#383838;font-weight:normal;letter-spacing:0.1px;">n/a</div>
<div class="a t" style="left:742.2px;top:668.70px;font-size:14px;line-height:14px;color:#383838;font-weight:normal;letter-spacing:0.1px;">n/a</div>
<div class="a t" style="left:800.2px;top:668.70px;font-size:14px;line-height:14px;color:#383838;font-weight:normal;letter-spacing:0.1px;">n/a</div>
<div class="a t" style="left:857.2px;top:668.70px;font-size:14px;line-height:14px;color:#383838;font-weight:normal;letter-spacing:0.1px;">n/a</div>
<div class="a t" style="left:915.2px;top:668.70px;font-size:14px;line-height:14px;color:#383838;font-weight:normal;letter-spacing:0.1px;">n/a</div>
<div class="a t" style="left:972.2px;top:668.70px;font-size:14px;line-height:14px;color:#383838;font-weight:normal;letter-spacing:0.1px;">n/a</div>
<div class="a t" style="left:397.2px;top:726.70px;font-size:14px;line-height:14px;color:#383838;font-weight:normal;letter-spacing:0.1px;">n/a</div>
<div class="a t" style="left:455.2px;top:726.70px;font-size:14px;line-height:14px;color:#383838;font-weight:normal;letter-spacing:0.1px;">n/a</div>
<div class="a t" style="left:512.2px;top:726.70px;font-size:14px;line-height:14px;color:#383838;font-weight:normal;letter-spacing:0.1px;">n/a</div>
<div class="a t" style="left:570.2px;top:726.70px;font-size:14px;line-height:14px;color:#383838;font-weight:normal;letter-spacing:0.1px;">n/a</div>
<div class="a t" style="left:627.2px;top:726.70px;font-size:14px;line-height:14px;color:#383838;font-weight:normal;letter-spacing:0.1px;">n/a</div>
<div class="a t" style="left:685.2px;top:726.70px;font-size:14px;line-height:14px;color:#383838;font-weight:normal;letter-spacing:0.1px;">n/a</div>
<div class="a t" style="left:742.2px;top:726.70px;font-size:14px;line-height:14px;color:#383838;font-weight:normal;letter-spacing:0.1px;">n/a</div>
<div class="a t" style="left:800.2px;top:726.70px;font-size:14px;line-height:14px;color:#383838;font-weight:normal;letter-spacing:0.1px;">n/a</div>
<div class="a t" style="left:857.2px;top:726.70px;font-size:14px;line-height:14px;color:#383838;font-weight:normal;letter-spacing:0.1px;">n/a</div>
<div class="a t" style="left:915.2px;top:726.70px;font-size:14px;line-height:14px;color:#383838;font-weight:normal;letter-spacing:0.1px;">n/a</div>
<div class="a t" style="left:972.2px;top:726.70px;font-size:14px;line-height:14px;color:#383838;font-weight:normal;letter-spacing:0.1px;">n/a</div>
<div class="a t" style="left:397.2px;top:783.70px;font-size:14px;line-height:14px;color:#383838;font-weight:normal;letter-spacing:0.1px;">n/a</div>
<div class="a t" style="left:455.2px;top:783.70px;font-size:14px;line-height:14px;color:#383838;font-weight:normal;letter-spacing:0.1px;">n/a</div>
<div class="a t" style="left:512.2px;top:783.70px;font-size:14px;line-height:14px;color:#383838;font-weight:normal;letter-spacing:0.1px;">n/a</div>
<div class="a t" style="left:570.2px;top:783.70px;font-size:14px;line-height:14px;color:#383838;font-weight:normal;letter-spacing:0.1px;">n/a</div>
<div class="a t" style="left:627.2px;top:783.70px;font-size:14px;line-height:14px;color:#383838;font-weight:normal;letter-spacing:0.1px;">n/a</div>
<div class="a t" style="left:685.2px;top:783.70px;font-size:14px;line-height:14px;color:#383838;font-weight:normal;letter-spacing:0.1px;">n/a</div>
<div class="a t" style="left:742.2px;top:783.70px;font-size:14px;line-height:14px;color:#383838;font-weight:normal;letter-spacing:0.1px;">n/a</div>
<div class="a t" style="left:800.2px;top:783.70px;font-size:14px;line-height:14px;color:#383838;font-weight:normal;letter-spacing:0.1px;">n/a</div>
<div class="a t" style="left:857.2px;top:783.70px;font-size:14px;line-height:14px;color:#383838;font-weight:normal;letter-spacing:0.1px;">n/a</div>
<div class="a t" style="left:915.2px;top:783.70px;font-size:14px;line-height:14px;color:#383838;font-weight:normal;letter-spacing:0.1px;">n/a</div>
<div class="a t" style="left:972.2px;top:783.70px;font-size:14px;line-height:14px;color:#383838;font-weight:normal;letter-spacing:0.1px;">n/a</div>
<div class="a t" style="left:397.2px;top:841.70px;font-size:14px;line-height:14px;color:#383838;font-weight:normal;letter-spacing:0.1px;">n/a</div>
<div class="a t" style="left:455.2px;top:841.70px;font-size:14px;line-height:14px;color:#383838;font-weight:normal;letter-spacing:0.1px;">n/a</div>
<div class="a t" style="left:512.2px;top:841.70px;font-size:14px;line-height:14px;color:#383838;font-weight:normal;letter-spacing:0.1px;">n/a</div>
<div class="a t" style="left:570.2px;top:841.70px;font-size:14px;line-height:14px;color:#383838;font-weight:normal;letter-spacing:0.1px;">n/a</div>
<div class="a t" style="left:627.2px;top:841.70px;font-size:14px;line-height:14px;color:#383838;font-weight:normal;letter-spacing:0.1px;">n/a</div>
<div class="a t" style="left:685.2px;top:841.70px;font-size:14px;line-height:14px;color:#383838;font-weight:normal;letter-spacing:0.1px;">n/a</div>
<div class="a t" style="left:742.2px;top:841.70px;font-size:14px;line-height:14px;color:#383838;font-weight:normal;letter-spacing:0.1px;">n/a</div>
<div class="a t" style="left:800.2px;top:841.70px;font-size:14px;line-height:14px;color:#383838;font-weight:normal;letter-spacing:0.1px;">n/a</div>
<div class="a t" style="left:857.2px;top:841.70px;font-size:14px;line-height:14px;color:#383838;font-weight:normal;letter-spacing:0.1px;">n/a</div>
<div class="a t" style="left:915.2px;top:841.70px;font-size:14px;line-height:14px;color:#383838;font-weight:normal;letter-spacing:0.1px;">n/a</div>
<div class="a t" style="left:972.2px;top:841.70px;font-size:14px;line-height:14px;color:#383838;font-weight:normal;letter-spacing:0.1px;">n/a</div>
</div>
<div class="a" style="left:1028px;top:112px;width:2px;height:754px;background:#b8c0e4"></div>
<div class="a" style="left:755px;top:811px;width:27px;height:1px;background:repeating-linear-gradient(135deg,#5c1212 7.181px,#5c1212 14.252px,#0a0a4e 14.252px,#0a0a4e 24.890px);background-attachment:fixed"></div>
<div class="a" style="left:768px;top:799px;width:1px;height:26px;background:repeating-linear-gradient(135deg,#5c1212 7.181px,#5c1212 14.252px,#0a0a4e 14.252px,#0a0a4e 24.890px);background-attachment:fixed"></div>
<div class="a" style="left:388px;top:551px;width:363px;height:179px;border:3px solid #d01018;box-sizing:border-box"></div>
<div class="a" style="left:1030px;top:112px;width:21px;height:754px;background:#f0f0f0"></div>
<div class="a" style="left:1051px;top:111px;width:1px;height:756px;background:#8a8a8a"></div>
<div class="a" style="left:1030px;top:133px;width:21px;height:1px;background:#b4bce0"></div>
<svg class="a" style="left:1035px;top:117px;" width="11" height="10" viewBox="0 0 11 10"><path d="M1.2 8 L5.5 3 L9.8 8" stroke="#5a5a5a" stroke-width="2" fill="none"/></svg>
<div class="a" style="left:1031px;top:604px;width:19px;height:22px;background:#cdcdcd"></div>
<svg class="a" style="left:1035px;top:850px;" width="11" height="10" viewBox="0 0 11 10"><path d="M1.2 2 L5.5 7 L9.8 2" stroke="#5a5a5a" stroke-width="2" fill="none"/></svg>
<div class="a" style="left:0px;top:884px;width:1063px;height:26px;background:#dadada;border-top:1px solid #c0c0c0;border-bottom:1px solid #bdbdbd;box-sizing:border-box"></div>
<div class="a t" style="left:7.5px;top:892.46px;font-size:14.4px;line-height:14.4px;color:#000;font-weight:normal;letter-spacing:0px;">Sequence Viewer</div>
<svg class="a" style="left:1017px;top:892px;" width="12" height="12" viewBox="0 0 12 12"><path d="M3.5 3.5 V1.2 H10.8 V8.5 H8.5" fill="none" stroke="#3c3c3c" stroke-width="1.6"/><rect x="1" y="3.8" width="7.5" height="7.2" fill="none" stroke="#3c3c3c" stroke-width="1.7"/></svg>
<svg class="a" style="left:1043px;top:893px;" width="11" height="11" viewBox="0 0 11 11"><path d="M1 1 L10 10 M10 1 L1 10" stroke="#3c3c3c" stroke-width="1.9"/></svg>
<div class="a" style="left:1px;top:913px;width:1062px;height:85px;background:#fff;border-right:1px solid #7a7f90;border-bottom:1px solid #7a7f90;box-sizing:border-box"></div>
<div class="a" style="left:1px;top:945px;width:60px;height:52px;background:#f0f0f0"></div>
<div class="a" style="left:61px;top:913px;width:1px;height:84px;background:#dcdcdc"></div>
<div class="a t" style="left:29.2px;top:923.05px;font-size:15px;line-height:15px;color:#000;font-weight:normal;letter-spacing:0px;">1</div>
<div class="a" style="left:0px;top:0px;width:1px;height:1000px;background:#a0a0a0"></div>
<div class="a" style="left:1064px;top:0px;width:1px;height:1000px;background:#8a8a8a"></div>
</body></html>
